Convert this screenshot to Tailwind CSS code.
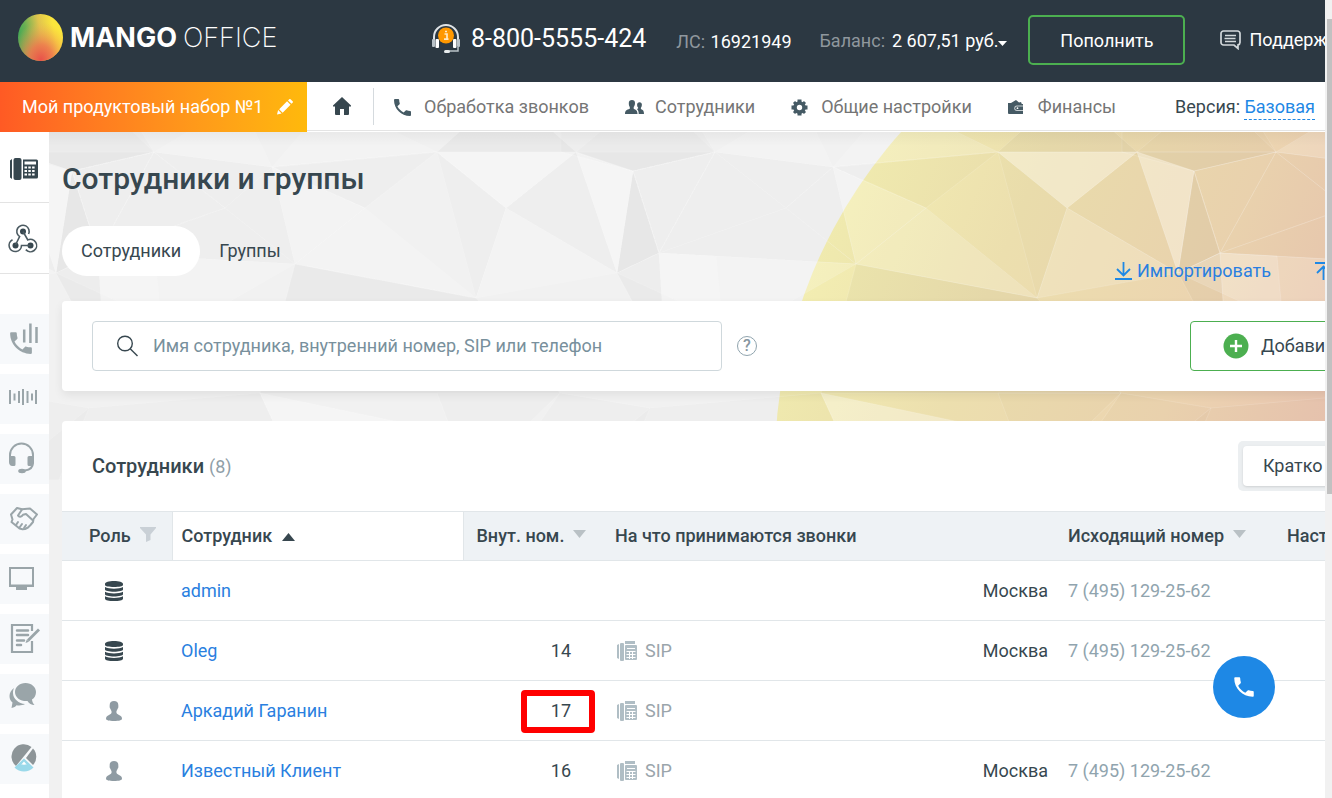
<!DOCTYPE html>
<html lang="ru">
<head>
<meta charset="utf-8">
<meta name="viewport" content="width=device-width, initial-scale=1">
<title>Сотрудники и группы</title>
<script src="https://cdn.jsdelivr.net/npm/@tailwindcss/browser@4"></script>
</head>
<body class="flex h-screen overflow-hidden bg-white font-['Roboto',sans-serif] text-lg leading-6 text-[#37474f]">

<svg class="hidden" aria-hidden="true">
  <symbol id="db" viewBox="0 0 18 20">
    <path fill="#37474f" d="M0 3C0 1.200 4 0 9 0s9 1.200 9 3v1c0 1.200-4 2-9 2S0 5.200 0 4zM0 6c2 1.300 5.500 1.700 9 1.700S16 7.300 18 6v2.600c0 1.300-4 2.200-9 2.200S0 9.900 0 8.600zM0 10.700c2 1.300 5.500 1.700 9 1.700s7-.4 9-1.700v2.500c0 1.300-4 2.200-9 2.200s-9-.9-9-2.200zM0 15.200c2 1.300 5.500 1.700 9 1.700s7-.4 9-1.700v2.500C18 19.200 14 20 9 20s-9-.8-9-2.300z"/>
  </symbol>
  <symbol id="person" viewBox="0 0 16 20">
    <path fill="#8f9ba3" d="M8 0c2.700 0 4.300 1.500 4.300 4 0 1 .2 1.800 0 2.600-.2.800-.7 1-.9 1.700-.3 1-1 1.700-1 2.700 0 1.500.8 2.200 2.600 2.900 2 .8 3 1.700 3 4.100 0 1-3 2-8 2s-8-1-8-2c0-2.400 1-3.300 3-4.100C4.800 13.200 5.600 12.500 5.600 11c0-1-.7-1.700-1-2.700-.2-.7-.7-.9-.9-1.700-.2-.8 0-1.600 0-2.600C3.700 1.500 5.300 0 8 0z"/>
  </symbol>
  <symbol id="sip" viewBox="0 0 20 20">
    <g fill="#b0bec5"><path d="M0 4l2-1v15l-2-1z"/><rect x="3" y="2" width="4" height="18" rx="1"/><path d="M8 0h10v3H8z"/><rect x="8" y="4" width="12" height="15" rx="1"/></g>
    <path stroke="#fff" stroke-width="1" fill="none" d="M10 7.500h8M9.500 10.500h9M9.500 13.500h9M9.500 16.500h9M12.500 11v7M15.500 11v7"/>
  </symbol>
  <symbol id="handset" viewBox="0 0 24 24">
    <path fill="currentColor" d="M6.600 10.800c1.400 2.800 3.800 5.100 6.600 6.600l2.200-2.200c.3-.3.700-.4 1-.2 1.100.4 2.300.6 3.600.6.600 0 1 .4 1 1V20c0 .6-.4 1-1 1C10.600 21 3 13.400 3 4c0-.6.4-1 1-1h3.500c.6 0 1 .4 1 1 0 1.200.2 2.400.6 3.600.1.300 0 .7-.2 1z"/>
  </symbol>
</svg>

<div class="flex min-w-0 flex-1 flex-col overflow-hidden">

  <header class="flex h-[82px] shrink-0 items-center overflow-hidden bg-[#2c3842] text-white whitespace-nowrap">
    <a href="#" class="ml-[18px] mb-[7px] flex w-[414px] shrink-0 items-center gap-[7px]" aria-label="MANGO OFFICE">
      <svg width="45" height="47" viewBox="0 0 45 47">
        <defs>
          <radialGradient id="mangoRed" gradientUnits="userSpaceOnUse" cx="23" cy="46" r="38" gradientTransform="translate(4.600 0) scale(.8 1)"><stop offset="0" stop-color="#e9514a"/><stop offset=".4" stop-color="#ee7a4e" stop-opacity=".9"/><stop offset="1" stop-color="#f2b04e" stop-opacity="0"/></radialGradient>
          <linearGradient id="mangoBase" x1="0" y1=".5" x2="1" y2=".3"><stop offset="0" stop-color="#3fa656"/><stop offset=".2" stop-color="#6bb053"/><stop offset=".5" stop-color="#e0c44e"/><stop offset=".8" stop-color="#fbe63c"/></linearGradient>
        </defs>
        <ellipse cx="22.500" cy="23.500" rx="22.500" ry="23.500" fill="url(#mangoBase)"/>
        <ellipse cx="22.500" cy="23.500" rx="22.500" ry="23.500" fill="url(#mangoRed)"/>
      </svg>
      <span class="flex gap-[6px] font-['Inter',sans-serif] text-[27px] leading-8"><b class="font-bold">MANGO</b><span class="font-extralight">OFFICE</span></span>
    </a>
    <div class="flex shrink-0 items-center gap-[11px] pb-[5px]">
      <svg width="28" height="31" viewBox="0 0 28 31" fill="none">
        <path d="M2 18v-4a12 12 0 0 1 24 0v4" stroke="#dfe3e6" stroke-width="2"/>
        <rect x="0" y="16" width="3" height="8" rx="1" fill="#b9c2c8"/><rect x="3.500" y="16" width="3.500" height="9" rx="1" fill="#fff"/>
        <rect x="25" y="16" width="3" height="8" rx="1" fill="#b9c2c8"/><rect x="21" y="16" width="3.500" height="9" rx="1" fill="#fff"/>
        <path d="M26 24v4h-9" stroke="#b9c2c8" stroke-width="1.500"/><rect x="12" y="27" width="6" height="3" rx="1.500" fill="#e8ecee"/>
        <circle cx="14" cy="12.500" r="8" fill="#ff9800"/>
        <path d="M12.500 11h2.500v5M12 16.200h4.500M13 8.500h2" stroke="#ffe9c4" stroke-width="1.700"/>
      </svg>
      <span class="text-[25px] leading-8">8-800-5555-424</span>
    </div>
    <div class="ml-[30px] shrink-0 pt-[2px]"><span class="text-[#8f979d]">ЛС:</span> <span class="ml-px">16921949</span></div>
    <div class="ml-7 flex shrink-0 items-center gap-[7px]"><span class="text-[#8f979d]">Баланс:</span>
      <button class="flex items-center">2 607,51 руб.<svg class="mt-1" width="9" height="5" viewBox="0 0 9 5"><path d="M0 0h9L4.500 5z" fill="#fff"/></svg></button></div>
    <button class="mb-[2px] ml-[21px] h-[50px] w-[157px] shrink-0 rounded-[5px] border-2 border-[#4caf50] pt-px">Пополнить</button>
    <a href="#" class="mb-[2px] ml-[35px] flex shrink-0 items-center gap-2">
      <svg width="21" height="20" viewBox="0 0 21 20" fill="none" stroke="#d3d8db" stroke-width="1.700"><path d="M3.500 1h14A2.500 2.500 0 0 1 20 3.500v9a2.500 2.500 0 0 1-2 2.400V18.500l-4-3.500H3.500A2.500 2.500 0 0 1 1 12.500v-9A2.500 2.500 0 0 1 3.500 1zM5 5.500h11M4.500 8.500h11M5 11.500h11" /></svg>
      Поддержка</a>
  </header>

  <nav class="relative z-10 flex h-[50px] shrink-0 items-stretch whitespace-nowrap" aria-label="Основное меню">
    <button class="flex w-[307px] shrink-0 items-center bg-linear-to-r from-[#ff5a24] to-[#ffb90b] pl-[22px] text-white">Мой продуктовый набор №1
      <svg class="ml-[14px]" width="16" height="16" viewBox="0 0 17 17" fill="#fff"><path d="M0 16.500l1.200-4.700 3.700 3.600zM2.300 10.800l8.400-8.300 3.700 3.700-8.400 8.300zM11.700 1.500L13 .3a1 1 0 0 1 1.400 0l2.200 2.200a1 1 0 0 1 0 1.400l-1.200 1.200z"/></svg>
    </button>
    <div class="mb-px flex min-w-0 flex-1 items-center overflow-hidden border-b border-[#e4e4e4] bg-white pt-[2px] text-[#757575]">
      <a href="#" class="mb-[2px] flex h-[37px] w-[67px] shrink-0 items-center justify-center border-r border-[#d5dade] pl-1" aria-label="Главная"><svg width="18" height="18" viewBox="0 0 18 18" fill="#37474f"><path d="M9 0l9 8.500v1h-2V17a1 1 0 0 1-1 1h-4v-6H7v6H3a1 1 0 0 1-1-1V9.500H0v-1z"/></svg></a>
      <a href="#" class="ml-[20px] flex shrink-0 items-center gap-[13px]"><svg width="17" height="17" viewBox="3 3 18 18" class="text-[#455a64]"><use href="#handset" x="0" y="0" width="24" height="24"/></svg>Обработка звонков</a>
      <a href="#" class="ml-[36px] flex shrink-0 items-center gap-[11px]"><svg width="19" height="14" viewBox="0 0 19 14" fill="#455a64"><path d="M7 0c2 0 3 1.300 3 3 0 1.800-.5 3-1.300 4v1.700C11 9.800 12.500 10.500 12.500 14H0c0-3.500 1.500-4.200 4.800-5.300V7C4 6 3.800 4.800 3.800 3 3.800 1.300 5 0 7 0zM14.500 2.200c1.600 0 2.400 1 2.400 2.500 0 1.300-.4 2.300-1 3v1.400c2 .9 3.100 1.700 3.100 4.900h-5.300c0-2.500-.5-3.800-1.800-4.900l1.200-.5v-1c-.7-.6-1-1.700-1-2.900 0-1.500.9-2.500 2.400-2.500z"/></svg>Сотрудники</a>
      <a href="#" class="ml-[36px] flex shrink-0 items-center gap-[13px]"><svg width="17" height="17" viewBox="0 0 17 17"><g stroke="#455a64" fill="none"><circle cx="8.500" cy="8.500" r="4.500" stroke-width="3.600"/><path stroke-width="4" d="M8.500 .5v3M8.500 13.500v3M.5 8.500h3M13.500 8.500h3"/><path stroke-width="3" d="M3 3l2 2M12 12l2 2M14 3l-2 2M5 12l-2 2"/></g></svg>Общие настройки</a>
      <a href="#" class="ml-[36px] flex shrink-0 items-center gap-[15px]"><svg width="15" height="14" viewBox="0 0 15 14"><path fill="#455a64" d="M0 3h3l5-3 3 2.500 2-.5.800 2H15v10H1a1 1 0 0 1-1-1z"/><path fill="#fff" fill-opacity=".7" d="M9 5.500h6v5.500H9A2.500 2.500 0 0 1 9 5.500z"/><path fill="#455a64" d="M9 6.500h6V10H9a1.700 1.700 0 0 1 0-3.500z"/><circle cx="9.500" cy="8.200" r=".9" fill="#fff"/></svg>Финансы</a>
      <div class="ml-auto shrink-0 pr-[10px] text-[#37474f]">Версия: <a href="#" class="border-b border-dashed border-[#1e88e5] pb-[2px] text-[#1e88e5]">Базовая</a></div>
    </div>
  </nav>

  <div class="flex min-h-0 flex-1">
    <aside class="flex w-[49px] shrink-0 flex-col bg-white">
      <a href="#" class="h-[71px] shrink-0 border-b border-[#e3e3e3]" aria-label="Виртуальная АТС"><svg width="49" height="70" viewBox="0 0 49 70"><g fill="#37474f"><path d="M10 28.500l2-1.500v20l-2-1.500z"/><rect x="13.500" y="26" width="8" height="22" rx="2"/><path d="M23 27.500h13.500a1.500 1.500 0 0 1 1.500 1.500v16a1.500 1.500 0 0 1-1.500 1.500H23z"/></g><path stroke="#fff" stroke-width="3" d="M24.500 31h11.500"/><path stroke="#fff" stroke-width="2" stroke-dasharray="2.500 1.300" d="M24.500 35.500h11M24.500 39h11M24.500 42.500h11"/></svg></a>
      <a href="#" class="h-[71px] shrink-0 border-b border-[#e3e3e3]" aria-label="Интеграции"><svg width="49" height="70" viewBox="0 0 49 70" fill="none" stroke="#4b5a61" stroke-width="1.600"><g fill="#37474f" stroke="none"><circle cx="23" cy="28.500" r="3"/><circle cx="15.500" cy="42.500" r="3"/><circle cx="30.500" cy="42.500" r="3"/></g><path d="M28.600 31a6.200 6.200 0 1 0-9 2.600L15.500 42M12.500 36.800a6.200 6.200 0 1 0 9 5.700h9M25.800 46.600a6.200 6.200 0 1 0 2-9.700L23 28.500"/></svg></a>
      <div class="mt-10 flex flex-col gap-[10px]">
        <a href="#" class="h-[50px] bg-[#f7f9fb]" aria-label="Звонки"><svg width="49" height="50" viewBox="0 0 49 50" class="text-[#9aa5a9]"><use href="#handset" x="6.500" y="14.500" width="29" height="29"/><path stroke="currentColor" stroke-width="2.500" d="M24.200 15.500v13M30.400 9.500v19.500M36.500 13v16"/></svg></a>
        <a href="#" class="h-[50px] bg-[#f7f9fb]" aria-label="Записи"><svg width="49" height="50" viewBox="0 0 49 50"><path stroke="#9aa5a9" stroke-width="2" d="M10 16v14M14.500 19.500v7M19 17v12M23 15v16M27.500 17v12M32 19.500v7M36 16v14"/></svg></a>
        <a href="#" class="h-[50px] bg-[#f7f9fb]" aria-label="Контакт-центр"><svg width="49" height="50" viewBox="0 0 49 50" fill="none" stroke="#9aa5a9" stroke-width="2"><path d="M10 28V21a11.500 11.500 0 0 1 23 0v7c0 5-3 8-8 8.500"/><path fill="#9aa5a9" stroke="none" d="M9 22h5a1.500 1.500 0 0 1 1.500 1.500v7A1.500 1.500 0 0 1 14 32h-1.500C10 32 9 30 9 28zM34 22h-5a1.500 1.500 0 0 0-1.500 1.500v7A1.500 1.500 0 0 0 29 32h1.500c2.500 0 3.500-2 3.500-4z"/><ellipse cx="22" cy="37" rx="3.800" ry="2.200" fill="#9aa5a9" stroke="none"/></svg></a>
        <a href="#" class="h-[50px] bg-[#f7f9fb]" aria-label="Партнёры"><svg width="49" height="50" viewBox="0 0 49 50" fill="none" stroke="#9aa5a9" stroke-width="2" stroke-linejoin="round" stroke-linecap="round"><path d="M17 14l-6 6.500 1.500 5L11.500 28l8 6.500 3 .8 2.500-.3 3-1.500 2.500-2.500 2.500-3 .5-3 3.500-4.500-7-6-8 .8L17 14z"/><path d="M22 15.500l-4 6c1 1.800 3.500 1.500 5-.8l3-.7 6.500 6M16 31l2-3M19.500 33.500l2.500-3.500M24 34l2-3"/></svg></a>
        <a href="#" class="h-[50px] bg-[#f7f9fb]" aria-label="Экран"><svg width="49" height="50" viewBox="0 0 49 50"><path fill="#9aa5a9" fill-rule="evenodd" d="M9 13h25v20h-7v3H16v-3H9zM11 15v15.500h21V15z"/></svg></a>
        <a href="#" class="h-[50px] bg-[#f7f9fb]" aria-label="Заметки"><svg width="49" height="50" viewBox="0 0 49 50" fill="none" stroke="#9aa5a9" stroke-width="2.200"><path d="M32 17v-6H12v27h20V27"/><path stroke-linecap="round" stroke-width="2.500" d="M17 16.500h11M17 21h11M17 26.500h7M17 31h4"/><path stroke-width="2.800" d="M28 26.500L39 15.500"/><path fill="#9aa5a9" stroke="none" d="M25.500 29l1.300-3.500 2.200 2.200z"/></svg></a>
        <a href="#" class="h-[50px] bg-[#f7f9fb]" aria-label="Чаты"><svg width="49" height="50" viewBox="0 0 49 50" fill="#9aa5a9"><path d="M14 14c-3 2-4.500 5-4.500 8 0 3 1 5 3 6.500L11.500 34c2.500-.5 4-1.500 5-2.800 3 .5 6 .2 8.500-1.200-6-.5-12-5-12-11 0-2 .3-3.500 1-5z"/><path d="M25.500 9c6 0 10.500 4 10.500 9 0 3.300-1.500 6-4 7.500.2 2 1 4 2.500 5.500-3 0-5.500-1.500-7-4-6.500.5-12.500-3-12.500-9 0-5 4.500-9 10.500-9z"/></svg></a>
        <a href="#" class="h-[50px] bg-[#f7f9fb]" aria-label="Аналитика"><svg width="49" height="50" viewBox="0 0 49 50"><path fill="#8d9598" d="M16 32A11.800 11.800 0 0 1 31.500 13z"/><path fill="#8d9598" d="M26 24l7-9.500A12 12 0 0 1 33 31z"/><path fill="#9ad9ea" d="M24 24.500l9.500 9a13.500 13.500 0 0 1-19 0z"/><path fill="#fff" d="M24 27.500l3 3.500c-1-.6-2-.6-3 0-1-.6-2-.6-3 0z"/></svg></a>
      </div>
    </aside>

    <main class="relative min-w-0 flex-1 overflow-hidden bg-[#f1f1f1] pl-[13px]">
      <!-- Faceted backdrop with the large mango disc -->
      <svg class="absolute inset-0 h-full w-full" aria-hidden="true">
        <defs>
          <linearGradient id="disc" gradientUnits="userSpaceOnUse" x1="790" y1="230" x2="1340" y2="450"><stop offset="0" stop-color="#f4f0b2"/><stop offset=".35" stop-color="#ecdfae"/><stop offset=".7" stop-color="#ecd4b0"/><stop offset="1" stop-color="#e8c2b0"/></linearGradient>
          <linearGradient id="topShade" x1="0" y1="0" x2="0" y2="1"><stop offset="0" stop-color="#000" stop-opacity=".04"/><stop offset="1" stop-color="#000" stop-opacity="0"/></linearGradient>
          <g id="facets" stroke="#fff" stroke-opacity=".18" stroke-width=".7">
            <g fill="#000" fill-opacity=".028">
              <path d="M437 152L576 152 506 90zM576 152L633 171 715 152zM633 171L617 273 659 253zM617 273L659 253 662 301 632 301zM295 264L476 298 560 393 260 393 275 340z"/>
            </g>
            <g fill="#000" fill-opacity=".01">
              <path d="M437 152L506 208 476 298zM272 167L437 152 365 208zM154 152L72 171 0 152 0 132 134 120zM72 171L56 273 98 253zM225 208L154 152 98 253zM576 152L617 273 506 208zM154 152L272 167 225 208zM633 171L715 152 659 253zM225 208L272 167 295 264zM98 253L225 208 295 264zM260 393L89 408 0 480 300 480zM560 393L650 408 620 480 500 480zM437 393L470 480 560 393zM576 152L715 152 650 90z"/>
            </g>
            <g fill="#fff" fill-opacity=".16">
              <path d="M365 208L295 264 476 298zM154 152L272 167 240 100zM437 152L272 167 330 100zM272 167L365 208 295 264zM506 208L476 298 617 273zM98 253L56 273 180 330 295 264zM659 253L716 256 720 301 662 301z"/>
            </g>
            <g fill="#fff" fill-opacity=".32">
              <path d="M437 152L506 208 576 152zM576 152L633 171 617 273zM260 393L300 480 437 430z"/>
            </g>
          </g>
        </defs>
        <g transform="translate(-49 -132)">
          <circle cx="1270" cy="462" r="495" fill="url(#disc)"/>
          <use href="#facets" x="-561"/><use href="#facets"/><use href="#facets" x="561"/><use href="#facets" x="1122"/>
        </g>
        <rect width="100%" height="14" fill="url(#topShade)"/>
      </svg>

      <div class="relative flex min-w-[1416px] flex-col">
        <h1 class="pt-7 text-[30px] leading-[38px] font-medium">Сотрудники и группы</h1>
        <div class="mt-7 flex items-start">
          <button class="h-[50px] rounded-full bg-white px-[19px]">Сотрудники</button>
          <button class="h-[50px] px-[19px]">Группы</button>
          <div class="mt-[33px] ml-auto flex items-center gap-[44px] pr-[146px]">
            <a href="#" class="flex items-center gap-[5px] text-[#2a7fe0]"><svg width="17" height="18" viewBox="0 0 17 18" fill="none" stroke="#1e88e5" stroke-width="1.800"><path d="M8.500 0v13M2 7l6.500 6.500L15 7M0 17h17"/></svg>Импортировать</a>
            <a href="#" aria-label="Экспортировать"><svg width="17" height="18" viewBox="0 0 17 18" fill="none" stroke="#1e88e5" stroke-width="1.800"><path d="M8.500 18V4M2 11l6.500-6.500L15 11M0 1h17"/></svg></a>
          </div>
        </div>

        <section class="mt-[18px] flex h-[90px] items-center rounded-[4px] bg-white px-[30px] shadow-[0_4px_10px_rgba(0,0,0,0.07)]">
          <label class="flex h-[50px] w-[630px] items-center gap-[15px] rounded-[4px] border border-[#cfd8dc] pl-6">
            <svg width="21" height="22" viewBox="0 0 21 22" fill="none" stroke="#37474f" stroke-width="1.400" aria-hidden="true"><circle cx="8" cy="8.500" r="7.300"/><path d="M13.200 13.700L20.500 21"/></svg>
            <input type="search" aria-label="Поиск сотрудника" placeholder="Имя сотрудника, внутренний номер, SIP или телефон" class="min-w-0 flex-1 bg-transparent outline-none placeholder:text-[#78909c]">
          </label>
          <button class="ml-[15px] flex size-5 items-center justify-center rounded-full border border-[#90a4ae] text-base leading-none font-medium text-[#8797a1]" aria-label="Справка">?</button>
          <button class="ml-auto flex h-[50px] w-[258px] items-center gap-3 rounded-[4px] border border-[#4caf50] pl-8">
            <svg width="26" height="26" viewBox="0 0 26 26"><circle cx="13" cy="13" r="12.500" fill="#4caf50"/><path d="M13 7v12M7 13h12" stroke="#fff" stroke-width="2.400"/></svg>Добавить</button>
        </section>

        <section class="mt-[30px] rounded-[4px] bg-white">
          <div class="flex h-[90px] items-center justify-between px-[30px]">
            <h2 class="text-xl font-medium">Сотрудники <span class="text-lg font-normal text-[#90a0a8]">(8)</span></h2>
            <div class="w-[210px] rounded-[5px] bg-[#eceff1] p-[5px]"><button class="h-10 rounded-[4px] bg-white px-5 shadow-sm">Кратко</button></div>
          </div>
          <table class="w-full table-fixed border-collapse whitespace-nowrap">
            <colgroup><col class="w-[110px]"><col class="w-[291px]"><col class="w-[139px]"><col class="w-[317px]"><col class="w-[136px]"><col class="w-[219px]"><col></colgroup>
            <thead>
              <tr class="h-[49px] border-y border-[#e1e6e9] bg-[#eef2f5] text-left *:p-0 *:font-medium">
                <th scope="col" class="border-r border-[#e1e6e9]"><span class="flex items-center gap-[9px] pl-[27px]">Роль<svg class="mb-1" width="16" height="15" viewBox="0 0 16 15" fill="#c9d0d6"><path d="M0 0h16v1l-5.500 6.500V13L6 15V7.500L0 1z"/></svg></span></th>
                <th scope="col" aria-sort="ascending" class="border-r border-[#e1e6e9] bg-white"><span class="flex items-center gap-[10px] pl-[9px]">Сотрудник<svg class="mt-[2px]" width="13" height="8" viewBox="0 0 13 8"><path d="M0 8h13L6.500 0z" fill="#37474f"/></svg></span></th>
                <th scope="col"><span class="flex items-center gap-[9px] pl-[13px]">Внут. ном.<svg class="mb-1" width="13" height="8" viewBox="0 0 13 8"><path d="M0 0h13L6.500 8z" fill="#b9c1c5"/></svg></span></th>
                <th scope="col"><span class="pl-[13px]">На что принимаются звонки</span></th>
                <td></td>
                <th scope="col"><span class="flex items-center gap-[9px] pl-[13px]">Исходящий номер<svg class="mb-1" width="13" height="8" viewBox="0 0 13 8"><path d="M0 0h13L6.500 8z" fill="#b9c1c5"/></svg></span></th>
                <th scope="col"><span class="pl-[13px]">Настройки</span></th>
              </tr>
            </thead>
            <tbody class="*:h-[60px] *:border-b *:border-[#e1e6e9]">
              <tr>
                <td class="p-0 pl-[43px]"><svg width="18" height="20"><use href="#db"/></svg></td>
                <td class="p-0 pl-[9px]"><a href="#" class="text-[#2a7fe0]">admin</a></td>
                <td></td><td></td>
                <td class="p-0 pr-[7px] text-right">Москва</td>
                <td class="p-0 pl-[13px] text-[#90a4ae]">7 (495) 129-25-62</td><td></td>
              </tr>
              <tr>
                <td class="p-0 pl-[43px]"><svg width="18" height="20"><use href="#db"/></svg></td>
                <td class="p-0 pl-[9px]"><a href="#" class="text-[#2a7fe0]">Oleg</a></td>
                <td class="p-0 pr-[31px] text-right">14</td>
                <td class="p-0 pl-[15px]"><span class="flex items-center gap-2 text-[#9aa5ab]"><svg width="20" height="20"><use href="#sip"/></svg>SIP</span></td>
                <td class="p-0 pr-[7px] text-right">Москва</td>
                <td class="p-0 pl-[13px] text-[#90a4ae]">7 (495) 129-25-62</td><td></td>
              </tr>
              <tr>
                <td class="p-0 pl-[44px]"><svg width="16" height="20"><use href="#person"/></svg></td>
                <td class="p-0 pl-[9px]"><a href="#" class="text-[#2a7fe0]">Аркадий Гаранин</a></td>
                <td class="relative p-0 pr-[31px] text-right">17<span class="absolute top-[9px] right-[7px] h-[43px] w-[74px] rounded-[4px] border-6 border-[#ff0000]"></span></td>
                <td class="p-0 pl-[15px]"><span class="flex items-center gap-2 text-[#9aa5ab]"><svg width="20" height="20"><use href="#sip"/></svg>SIP</span></td>
                <td></td><td></td><td></td>
              </tr>
              <tr>
                <td class="p-0 pl-[44px]"><svg width="16" height="20"><use href="#person"/></svg></td>
                <td class="p-0 pl-[9px]"><a href="#" class="text-[#2a7fe0]">Известный Клиент</a></td>
                <td class="p-0 pr-[31px] text-right">16</td>
                <td class="p-0 pl-[15px]"><span class="flex items-center gap-2 text-[#9aa5ab]"><svg width="20" height="20"><use href="#sip"/></svg>SIP</span></td>
                <td class="p-0 pr-[7px] text-right">Москва</td>
                <td class="p-0 pl-[13px] text-[#90a4ae]">7 (495) 129-25-62</td><td></td>
              </tr>
            </tbody>
          </table>
        </section>
      </div>
    </main>
  </div>
</div>

<!-- Scroll track -->
<div class="w-[7px] shrink-0 bg-[#f1f1f1] pt-[19px] pl-[2px]"><div class="h-[475px] bg-[#c1c1c1]"></div></div>

<button class="fixed right-[57px] bottom-20 z-20 flex size-[62px] items-center justify-center rounded-full bg-[#1e88e5] text-white" aria-label="Позвонить"><svg width="26" height="26"><use href="#handset"/></svg></button>
</body>
</html>
